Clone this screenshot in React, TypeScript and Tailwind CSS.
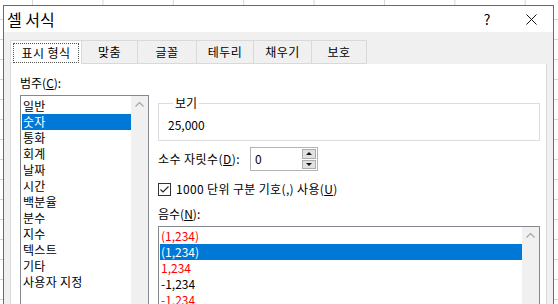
import React from "react";

const categories = [
  "일반",
  "숫자",
  "통화",
  "회계",
  "날짜",
  "시간",
  "백분율",
  "분수",
  "지수",
  "텍스트",
  "기타",
  "사용자 지정",
];

const negatives = [
  { text: "(1,234)", red: true, selected: false },
  { text: "(1,234)", red: false, selected: true },
  { text: "1,234", red: true, selected: false },
  { text: "-1,234", red: false, selected: false },
  { text: "-1,234", red: true, selected: false },
];

const tabs = [
  { label: "맞춤", w: "w-[56px]" },
  { label: "글꼴", w: "w-[59px]" },
  { label: "테두리", w: "w-[57px]" },
  { label: "채우기", w: "w-[58px]" },
  { label: "보호", w: "w-[55px]" },
];

function ScrollUp() {
  return (
    <div className="w-[17px] shrink-0 bg-[#f0f0f0] flex justify-center pt-[6px]">
      <svg width="9" height="5" viewBox="0 0 9 5">
        <path d="M0.5 4.5 L4.5 0.5 L8.5 4.5" stroke="#a6a6a6" strokeWidth="1.2" fill="none" />
      </svg>
    </div>
  );
}

function Spinner() {
  return (
    <div className="flex h-[24px] w-[68px] border border-[#b4b4b4] bg-white">
      <div className="flex-1 pl-[4px] leading-[22px]">0</div>
      <div className="flex w-[16px] flex-col gap-[1px] bg-white p-[1px]">
        <div className="flex flex-1 items-center justify-center border border-[#adadad] bg-[#e1e1e1]">
          <svg width="6" height="3" viewBox="0 0 6 3">
            <path d="M0 3 L3 0 L6 3 Z" fill="#111" />
          </svg>
        </div>
        <div className="flex flex-1 items-center justify-center border border-[#adadad] bg-[#e1e1e1]">
          <svg width="6" height="3" viewBox="0 0 6 3">
            <path d="M0 0 L3 3 L6 0 Z" fill="#111" />
          </svg>
        </div>
      </div>
    </div>
  );
}

export default function App() {
  return (
    <div className="h-[304px] w-[558px] overflow-hidden bg-white bg-[linear-gradient(to_right,#d6d6d6_1px,transparent_1px),linear-gradient(to_bottom,#d6d6d6_1px,transparent_1px)] bg-size-[70.4px_20px] bg-position-[32px_-1px] pl-[3px] pt-[5px] font-['Noto_Sans_CJK_KR','Malgun_Gothic',sans-serif] text-[12px] text-black">
      <div className="h-[340px] w-[551px] border border-[#1a7fd4] bg-[#f0f0f0]">
        {/* title bar */}
        <div className="flex h-[26px] items-center justify-between bg-white">
          <div className="pl-[3px] text-[16px] leading-[26px] text-black">셀 서식</div>
          <div className="flex h-full">
            <div className="flex w-[44px] items-center justify-center text-[14px] leading-none">?</div>
            <div className="flex w-[44px] items-center justify-center">
              <svg width="11" height="11" viewBox="0 0 11 11">
                <path d="M0.5 0.5 L10.5 10.5 M10.5 0.5 L0.5 10.5" stroke="#111" strokeWidth="1" />
              </svg>
            </div>
          </div>
        </div>

        {/* body */}
        <div className="pl-[6px] pt-[8px]">
          <div className="flex h-[24px]">
            <div className="flex w-[72px] items-center justify-center border border-b-0 border-[#d9d9d9] bg-white">
              <div className="flex h-[20px] w-[66px] items-center justify-center border border-dotted border-[#555] tracking-[0.4px]">
                표시 형식
              </div>
            </div>
            {tabs.map((t) => (
              <div
                key={t.label}
                className={`${t.w} flex items-center justify-center border border-l-0 border-[#d9d9d9] bg-[#f0f0f0] tracking-[0.4px]`}
              >
                {t.label}
              </div>
            ))}
          </div>

          {/* panel */}
          <div className="flex h-[260px] w-[537px] gap-[9px] border border-t-0 border-[#d9d9d9] bg-white pl-[9px] pt-[11px]">
            {/* category */}
            <div className="flex w-[129px] flex-col">
              <div className="leading-[16px]">
                범주(<span className="underline">C</span>):
              </div>
              <div className="mt-[4px] flex h-[220px] border border-[#828790] bg-white">
                <div className="flex-1 pl-[1px] pt-[2px]">
                  {categories.map((c, i) => (
                    <div
                      key={c}
                      className={`h-[16px] pl-[1px] leading-[16px] tracking-[0.3px] ${i === 1 ? "bg-[#0078d7] text-white" : ""}`}
                    >
                      {c}
                    </div>
                  ))}
                </div>
                <ScrollUp />
              </div>
            </div>

            {/* right side */}
            <div className="flex w-[382px] flex-col pt-[20px]">
              <fieldset className="border border-[#dcdcdc] pb-[7px] pl-[9px]">
                <legend className="ml-[5px] px-[2px] leading-[16px]">보기</legend>
                <div className="pt-[6px] leading-[16px]">25,000</div>
              </fieldset>

              <div className="mt-[6px] flex h-[24px] items-center">
                <div className="w-[92px] tracking-[0.45px]">
                  소수 자릿수(<span className="underline">D</span>):
                </div>
                <Spinner />
              </div>

              <div className="mt-[10px] flex h-[16px] items-center gap-[5px]">
                <div className="flex h-[13px] w-[13px] items-center justify-center border border-[#333] bg-white">
                  <svg width="11" height="11" viewBox="0 0 11 11">
                    <path d="M1.5 5.5 L4 8 L9.5 2.5" stroke="#222" strokeWidth="1.1" fill="none" />
                  </svg>
                </div>
                <div className="leading-[16px] tracking-[0.35px]">
                  1000 단위 구분 기호(,) 사용(<span className="underline">U</span>)
                </div>
              </div>

              <div className="mt-[9px] leading-[16px]">
                음수(<span className="underline">N</span>):
              </div>
              <div className="mt-[4px] flex h-[90px] border border-[#828790] bg-white">
                <div className="flex-1 pl-[1px] pt-[1px]">
                  {negatives.map((n, i) => (
                    <div
                      key={i}
                      className={`h-[16px] pl-[1px] leading-[16px] ${
                        n.selected ? "bg-[#0078d7] text-white" : n.red ? "text-[#ff0000]" : "text-black"
                      }`}
                    >
                      {n.text}
                    </div>
                  ))}
                </div>
                <ScrollUp />
              </div>
            </div>
          </div>
        </div>
      </div>
    </div>
  );
}
